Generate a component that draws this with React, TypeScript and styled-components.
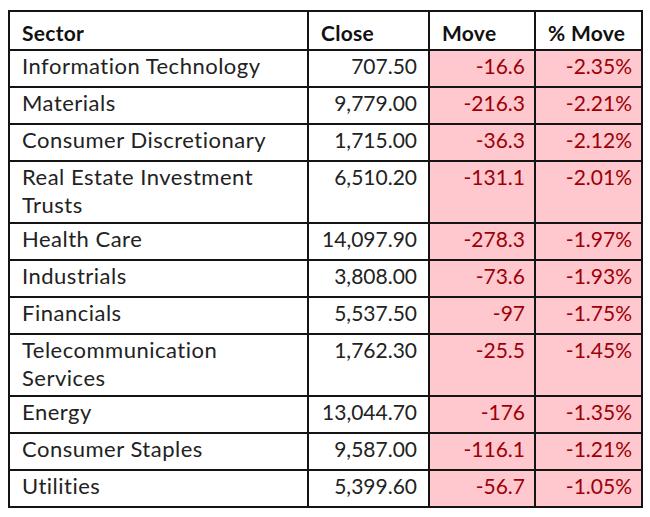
import React from 'react';
import styled, { createGlobalStyle } from 'styled-components';

interface SectorRow {
  sector: string;
  close: string;
  move: string;
  pct: string;
  tall?: boolean;
}

const rows: SectorRow[] = [
  { sector: 'Information Technology', close: '707.50', move: '-16.6', pct: '-2.35%' },
  { sector: 'Materials', close: '9,779.00', move: '-216.3', pct: '-2.21%' },
  { sector: 'Consumer Discretionary', close: '1,715.00', move: '-36.3', pct: '-2.12%' },
  { sector: 'Real Estate Investment Trusts', close: '6,510.20', move: '-131.1', pct: '-2.01%', tall: true },
  { sector: 'Health Care', close: '14,097.90', move: '-278.3', pct: '-1.97%' },
  { sector: 'Industrials', close: '3,808.00', move: '-73.6', pct: '-1.93%' },
  { sector: 'Financials', close: '5,537.50', move: '-97', pct: '-1.75%' },
  { sector: 'Telecommunication Services', close: '1,762.30', move: '-25.5', pct: '-1.45%', tall: true },
  { sector: 'Energy', close: '13,044.70', move: '-176', pct: '-1.35%' },
  { sector: 'Consumer Staples', close: '9,587.00', move: '-116.1', pct: '-1.21%' },
  { sector: 'Utilities', close: '5,399.60', move: '-56.7', pct: '-1.05%' },
];

const GlobalStyle = createGlobalStyle`
  html, body {
    margin: 0;
    background: #fff;
  }
  body {
    padding: 10px 0 0 8px;
    font-family: Lato, "Open Sans", "Liberation Sans", sans-serif;
  }
`;

export default function App() {
  return (
    <>
      <GlobalStyle />
      <Table>
        <colgroup>
          <col style={{ width: 299 }} />
          <col style={{ width: 121 }} />
          <col style={{ width: 106 }} />
          <col style={{ width: 107 }} />
        </colgroup>
        <thead>
          <HeadRow>
            <HeadCell>Sector</HeadCell>
            <HeadCell>Close</HeadCell>
            <HeadCell>Move</HeadCell>
            <HeadCell>% Move</HeadCell>
          </HeadRow>
        </thead>
        <tbody>
          {rows.map((row) => (
            <Row key={row.sector} $tall={row.tall}>
              <SectorCell>{row.sector}</SectorCell>
              <NumberCell>{row.close}</NumberCell>
              <LossCell>{row.move}</LossCell>
              <LossCell>{row.pct}</LossCell>
            </Row>
          ))}
        </tbody>
      </Table>
    </>
  );
}

const Table = styled.table`
  width: 633px;
  table-layout: fixed;
  border-collapse: collapse;
  border: 2px solid #141414;
  font-size: 21px;
  line-height: 28px;
  color: #222;
`;

const HeadRow = styled.tr`
  height: 39px;
`;

const Row = styled.tr<{ $tall?: boolean }>`
  height: ${({ $tall }) => ($tall ? '62px' : '37px')};
`;

const Cell = styled.td`
  border: 2px solid #141414;
  padding: 1px 11px 0 12px;
  vertical-align: top;
`;

const HeadCell = styled.th`
  border: 2px solid #141414;
  padding: 7px 11px 0 12px;
  vertical-align: top;
  font-weight: 700;
  text-align: left;
  letter-spacing: 0.3px;
  color: #111;
`;

const SectorCell = styled(Cell)`
  padding-right: 30px;
  font-size: 22px;
  letter-spacing: 0.5px;
`;

const NumberCell = styled(Cell)`
  text-align: right;
`;

const LossCell = styled(Cell)`
  text-align: right;
  background: #ffc7ce;
  color: #9c0006;
  padding-right: 9px;
`;
